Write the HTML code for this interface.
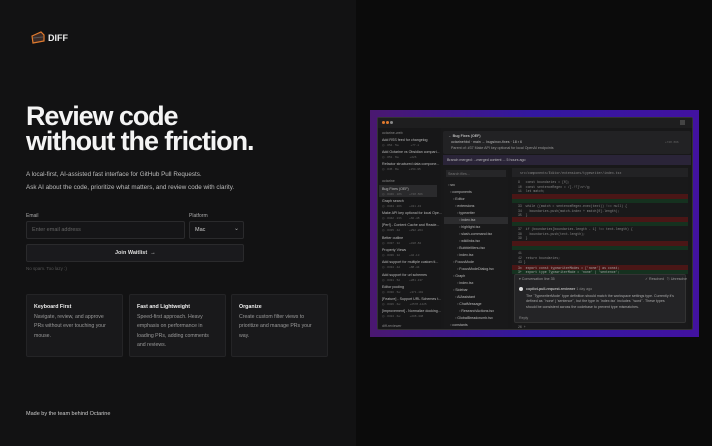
<!DOCTYPE html>
<html><head><meta charset="utf-8"><style>
*{margin:0;padding:0;box-sizing:border-box}
body{width:712px;height:446px;overflow:hidden;background:#0b0b0b;font-family:"Liberation Sans",sans-serif;position:relative;color:#eee}
.left{position:absolute;left:0;top:0;width:356px;height:446px;background:#121213}
.a{position:absolute;white-space:nowrap}
.h1{font-size:27px;font-weight:bold;letter-spacing:-1.1px;line-height:25px;color:#f4f4f4}
.p{font-size:6.3px;color:#bdbdbd}
.lbl{font-size:5px;color:#aaa}
.box{position:absolute;border:1px solid #2a2a2c;background:#151517;border-radius:2px}
.card{position:absolute;top:294px;width:97px;height:63px;background:#19191b;border:1px solid #242426;border-radius:2px;padding:9px 7px}
.card b{display:block;font-size:5.3px;color:#eee;margin-bottom:3px}
.card span{display:block;font-size:5.2px;color:#9a9a9a;line-height:9.3px}
.w{position:absolute;font-family:"Liberation Mono",monospace;font-size:3.2px;color:#888;white-space:nowrap}
.s{font-size:3.6px;color:#bbb;position:absolute;white-space:nowrap}
.m{font-size:3px;color:#666;position:absolute;white-space:nowrap}
</style></head><body>
<div class="left">
 <svg class="a" style="left:30px;top:30px" width="16" height="15" viewBox="0 0 16 15"><path d="M2 6 L11 2 L14 5 L14 11 L3 13 Z" fill="#3a2a26" stroke="#e07a2e" stroke-width="1.2"/><path d="M3 8 L13 7" stroke="#555" stroke-width="1"/></svg>
 <div class="a" style="left:48px;top:33px;font-size:9px;font-weight:bold;color:#eee">DIFF</div>
 <div class="a h1" style="left:26px;top:104px">Review code</div>
 <div class="a h1" style="left:26px;top:129px">without the friction.</div>
 <div class="a p" style="left:26px;top:171px">A local-first, AI-assisted fast interface for GitHub Pull Requests.</div>
 <div class="a p" style="left:26px;top:184px">Ask AI about the code, prioritize what matters, and review code with clarity.</div>
 <div class="a lbl" style="left:26px;top:213px">Email</div>
 <div class="a lbl" style="left:189px;top:213px">Platform</div>
 <div class="box" style="left:26px;top:221px;width:159px;height:18px"><span class="a" style="left:5px;top:5px;font-size:5.5px;color:#666">Enter email address</span></div>
 <div class="box" style="left:189px;top:221px;width:55px;height:18px"><span class="a" style="left:5px;top:5px;font-size:5.5px;color:#ccc">Mac</span><span class="a" style="left:44px;top:3px;font-size:6px;color:#aaa">⌄</span></div>
 <div class="box" style="left:26px;top:244px;width:218px;height:18px;background:#1a1a1d"><span class="a" style="left:88px;top:5px;font-size:5.5px;font-weight:bold;color:#ddd">Join Waitlist &nbsp;→</span></div>
 <div class="a" style="left:26px;top:266px;font-size:4.5px;color:#555">No spam. Too lazy :)</div>
 <div class="card" style="left:26px"><b>Keyboard First</b><span>Navigate, review, and approve<br>PRs without ever touching your<br>mouse.</span></div>
 <div class="card" style="left:129px"><b>Fast and Lightweight</b><span>Speed-first approach. Heavy<br>emphasis on performance in<br>loading PRs, adding comments<br>and reviews.</span></div>
 <div class="card" style="left:231px"><b>Organize</b><span>Create custom filter views to<br>prioritize and manage PRs your<br>way.</span></div>
 <div class="a" style="left:26px;top:411px;font-size:5.5px;color:#ccc">Made by the team behind Octarine</div>
</div>
<!-- purple frame -->
<div class="a" style="left:370px;top:110px;width:329px;height:227px;background:linear-gradient(90deg,#4a1870,#3318a0 50%,#4212a0);"></div>
<div class="a" style="left:377px;top:117px;width:316px;height:213px;background:#181819;border:1px solid #333;border-radius:2px;overflow:hidden">
 <div class="a" style="left:0;top:0;width:316px;height:10px;background:#1e1e1f"></div>
 <div class="a" style="left:4px;top:3px;width:3px;height:3px;border-radius:50%;background:#e07a2e"></div>
 <div class="a" style="left:8px;top:3px;width:3px;height:3px;border-radius:50%;background:#e07a2e"></div>
 <div class="a" style="left:12px;top:3px;width:3px;height:3px;border-radius:50%;background:#888"></div>
 <div class="a" style="left:302px;top:2px;width:5px;height:5px;background:#444"></div>
 <!-- sidebar -->
 <div class="a" style="left:0;top:10px;width:63px;height:203px;background:#171718">
  <div class="s" style="left:4px;top:3px;color:#888">octarine-web</div>
  <div class="s" style="left:4px;top:10px">Add RSS feed for changelog</div><div class="m" style="left:4px;top:15px">◎ · #54 · 5w &nbsp;&nbsp;&nbsp;&nbsp;&nbsp;&nbsp;&nbsp;&nbsp;&nbsp;&nbsp;&nbsp;&nbsp;&nbsp;+77 -1</div>
  <div class="s" style="left:4px;top:22px">Add Octarine vs Obsidian compari...</div><div class="m" style="left:4px;top:27px">◎ · #51 · 6w &nbsp;&nbsp;&nbsp;&nbsp;&nbsp;&nbsp;&nbsp;&nbsp;&nbsp;&nbsp;&nbsp;&nbsp;+226</div>
  <div class="s" style="left:4px;top:34px">Refactor structured data compone...</div><div class="m" style="left:4px;top:39px">◎ · #45 · 8w &nbsp;&nbsp;&nbsp;&nbsp;&nbsp;&nbsp;&nbsp;&nbsp;&nbsp;&nbsp;&nbsp;+154 -95</div>
  <div class="s" style="left:4px;top:51px;color:#888">octarine</div>
  <div class="a" style="left:1px;top:57px;width:58px;height:12px;background:#2a2a2c"></div>
  <div class="s" style="left:4px;top:59px">Bug Fixes (OEF)</div><div class="m" style="left:4px;top:64px">◎ · #346 · 18h &nbsp;&nbsp;&nbsp;&nbsp;&nbsp;&nbsp;&nbsp;&nbsp;+748 -566</div>
  <div class="s" style="left:4px;top:71px">Graph search</div><div class="m" style="left:4px;top:76px">◎ · #344 · 20h &nbsp;&nbsp;&nbsp;&nbsp;&nbsp;&nbsp;&nbsp;&nbsp;+431 -43</div>
  <div class="s" style="left:4px;top:83px">Make API key optional for local Ope...</div><div class="m" style="left:4px;top:88px">◎ · #342 · 23h &nbsp;&nbsp;&nbsp;&nbsp;&nbsp;&nbsp;&nbsp;&nbsp;+60 -48</div>
  <div class="s" style="left:4px;top:95px">[Perf] - Content Cache and Reade...</div><div class="m" style="left:4px;top:100px">◎ · #335 · 4d &nbsp;&nbsp;&nbsp;&nbsp;&nbsp;&nbsp;&nbsp;&nbsp;&nbsp;&nbsp;+292 -264</div>
  <div class="s" style="left:4px;top:108px">Better outline</div><div class="m" style="left:4px;top:113px">◎ · #337 · 3d &nbsp;&nbsp;&nbsp;&nbsp;&nbsp;&nbsp;&nbsp;&nbsp;&nbsp;&nbsp;+318 -84</div>
  <div class="s" style="left:4px;top:120px">Property Views</div><div class="m" style="left:4px;top:125px">◎ · #336 · 3d &nbsp;&nbsp;&nbsp;&nbsp;&nbsp;&nbsp;&nbsp;&nbsp;&nbsp;&nbsp;+42 -13</div>
  <div class="s" style="left:4px;top:132px">Add support for multiple custom ti...</div><div class="m" style="left:4px;top:137px">◎ · #334 · 4d &nbsp;&nbsp;&nbsp;&nbsp;&nbsp;&nbsp;&nbsp;&nbsp;&nbsp;&nbsp;+88 -44</div>
  <div class="s" style="left:4px;top:145px">Add support for url schemes</div><div class="m" style="left:4px;top:150px">◎ · #331 · 5d &nbsp;&nbsp;&nbsp;&nbsp;&nbsp;&nbsp;&nbsp;&nbsp;&nbsp;&nbsp;+281 -137</div>
  <div class="s" style="left:4px;top:157px">Editor pooling</div><div class="m" style="left:4px;top:162px">◎ · #330 · 5w &nbsp;&nbsp;&nbsp;&nbsp;&nbsp;&nbsp;&nbsp;&nbsp;&nbsp;&nbsp;+371 -191</div>
  <div class="s" style="left:4px;top:169px">[Feature] - Support URL Schemes t...</div><div class="m" style="left:4px;top:174px">◎ · #326 · 6w &nbsp;&nbsp;&nbsp;&nbsp;&nbsp;&nbsp;&nbsp;&nbsp;&nbsp;&nbsp;+2578 -1425</div>
  <div class="s" style="left:4px;top:181px">[Improvement] - Normalize docking...</div><div class="m" style="left:4px;top:186px">◎ · #324 · 6w &nbsp;&nbsp;&nbsp;&nbsp;&nbsp;&nbsp;&nbsp;&nbsp;&nbsp;&nbsp;+208 -348</div>
  <div class="s" style="left:4px;top:196px;color:#888">diff-reviewer</div>
 </div>
 <!-- header -->
 <div class="a" style="left:65px;top:13px;width:248px;height:23px;background:#222224;border-radius:2px">
  <div class="s" style="left:5px;top:3px;font-weight:bold">← Bug Fixes (OEF)</div>
  <div class="s" style="left:8px;top:9px">octarinehbd · main ← bugs/nov-fixes · 18 ▪ 6</div>
  <div class="m" style="left:222px;top:9px">+748 -566</div>
  <div class="s" style="left:8px;top:15px;color:#999">Parent of: #37 Make API key optional for local OpenAI endpoints</div>
 </div>
 <div class="a" style="left:65px;top:37px;width:248px;height:10px;background:#2a2438"><div class="s" style="left:4px;top:3px">Branch merged: ...merged content ... 5 hours ago</div></div>
 <!-- file tree -->
 <div class="a" style="left:66px;top:50px;width:64px;height:160px;background:#19191a">
  <div class="a" style="left:2px;top:2px;width:60px;height:7px;background:#262628"></div>
  <div class="s" style="left:4px;top:4px;color:#777">Search files...</div>
  <div class="s" style="left:4px;top:15px">▫ src</div><div class="s" style="left:6px;top:22px">▫ components</div>
  <div class="s" style="left:9px;top:29px">▫ Editor</div><div class="s" style="left:11px;top:36px">▫ extensions</div>
  <div class="s" style="left:13px;top:43px">▫ typewriter</div>
  <div class="a" style="left:0;top:49px;width:64px;height:7px;background:#2c2c2e"></div>
  <div class="s" style="left:15px;top:50px">▫ index.tsx</div>
  <div class="s" style="left:15px;top:57px">▫ highlight.tsx</div><div class="s" style="left:15px;top:64px">▫ slash-command.tsx</div>
  <div class="s" style="left:15px;top:71px">▫ wikilinks.tsx</div><div class="s" style="left:13px;top:78px">▫ BubbleMenu.tsx</div>
  <div class="s" style="left:13px;top:85px">▫ index.tsx</div><div class="s" style="left:9px;top:92px">▫ FocusMode</div>
  <div class="s" style="left:13px;top:99px">▫ FocusModeDialog.tsx</div><div class="s" style="left:9px;top:106px">▫ Graph</div>
  <div class="s" style="left:13px;top:113px">▫ index.tsx</div><div class="s" style="left:9px;top:120px">▫ Sidebar</div>
  <div class="s" style="left:11px;top:127px">▫ AIAssistant</div><div class="s" style="left:13px;top:134px">▫ ChatMessage</div>
  <div class="s" style="left:15px;top:141px">▫ ResearchActions.tsx</div><div class="s" style="left:11px;top:148px">▫ GlobalBreadcrumb.tsx</div>
  <div class="s" style="left:6px;top:155px">▫ constants</div>
 </div>
 <!-- diff -->
 <div class="a" style="left:134px;top:50px;width:176px;height:160px;background:#19191a">
  <div class="a" style="left:0;top:0;width:176px;height:9px;background:#222224"></div>
  <div class="w" style="left:8px;top:3px">src/components/Editor/extensions/typewriter/index.tsx</div>
  <div class="w" style="left:6px;top:12px;line-height:4.7px">9 &nbsp;&nbsp;const boundaries = [0];<br>10 &nbsp;const sentenceRegex = /[.!?]\s+/g;<br>11 &nbsp;let match;</div>
  <div class="a" style="left:0;top:26px;width:176px;height:4.7px;background:#4a1616"></div>
  <div class="a" style="left:0;top:30.7px;width:176px;height:4.7px;background:#15311f"></div>
  <div class="w" style="left:6px;top:36px;line-height:4.7px">33 &nbsp;while ((match = sentenceRegex.exec(text)) !== null) {<br>34 &nbsp;&nbsp;&nbsp;boundaries.push(match.index + match[0].length);<br>35 &nbsp;}</div>
  <div class="a" style="left:0;top:49px;width:176px;height:4.7px;background:#4a1616"></div>
  <div class="a" style="left:0;top:53.7px;width:176px;height:4.7px;background:#15311f"></div>
  <div class="w" style="left:6px;top:59px;line-height:4.7px">37 &nbsp;if (boundaries[boundaries.length - 1] !== text.length) {<br>38 &nbsp;&nbsp;&nbsp;boundaries.push(text.length);<br>39 &nbsp;}</div>
  <div class="a" style="left:0;top:73px;width:176px;height:4.7px;background:#4a1616"></div>
  <div class="a" style="left:0;top:77.7px;width:176px;height:4.7px;background:#15311f"></div>
  <div class="w" style="left:6px;top:83px;line-height:4.7px">41<br>42 &nbsp;return boundaries;<br>43 }</div>
  <div class="a" style="left:0;top:97px;width:176px;height:4.7px;background:#4a1616"></div>
  <div class="a" style="left:0;top:101.7px;width:176px;height:4.7px;background:#15311f"></div>
  <div class="w" style="left:6px;top:97.5px;line-height:4.7px;color:#aaa">3x &nbsp;export const typewriterModes = ['none'] as const;<br>3+ &nbsp;export type TypewriterMode = 'none' | 'sentence';</div>
  <div class="a" style="left:2px;top:106px;width:172px;height:49px;background:#242426;border:1px solid #333;border-radius:2px">
   <div class="s" style="left:4px;top:2px;color:#999">▾ Conversation line 35</div>
   <div class="s" style="left:130px;top:2px;color:#999">✓ Resolved &nbsp;&nbsp;⎋ Unresolve</div>
   <div class="a" style="left:4px;top:12px;width:4px;height:4px;border-radius:50%;background:#ddd"></div>
   <div class="s" style="left:11px;top:12px;font-weight:bold">copilot-pull-request-reviewer <span style="font-weight:normal;color:#888">1 day ago</span></div>
   <div class="s" style="left:11px;top:19px;line-height:5.3px;color:#aaa">The `TypewriterMode` type definition should match the workspace settings type. Currently it's<br>defined as `'none' | 'sentence'`, but the type in `index.tsx` includes `'word'`. These types<br>should be consistent across the codebase to prevent type mismatches.</div>
   <div class="s" style="left:4px;top:41px;color:#888">Reply</div>
  </div>
  <div class="w" style="left:6px;top:157px">26 +</div>
 </div>
</div>
</body></html>
